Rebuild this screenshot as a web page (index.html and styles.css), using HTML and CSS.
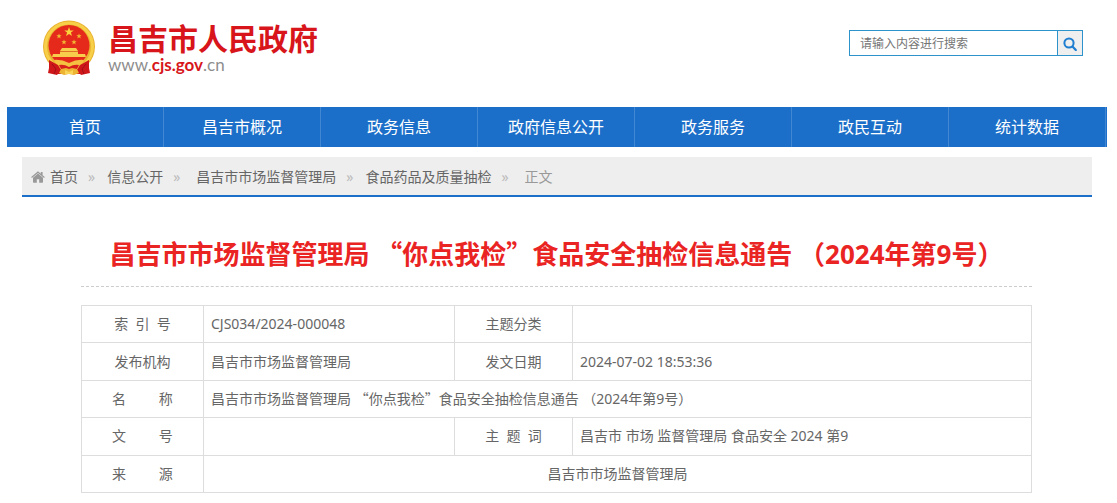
FILE: index.html
```html
<!DOCTYPE html>
<html lang="zh-CN">
<head>
<meta charset="utf-8">
<title>昌吉市人民政府</title>
<link rel="stylesheet" href="styles.css">
</head>
<body>
<div class="page">
  <header class="header">
    <a class="brand" href="#">
      <svg class="emblem" viewBox="0 0 54 56" aria-hidden="true">
        <circle cx="27" cy="26.500" r="26" fill="#e9b22f"/>
        <circle cx="27" cy="26.500" r="23.500" fill="none" stroke="#f7cf49" stroke-width="3"/>
        <circle cx="27" cy="25.500" r="20.500" fill="#e52a1c"/>
        <path d="m27 7 1.200 3.400h3.600l-2.900 2.200 1.100 3.500-3-2.100-3 2.100 1.100-3.500-2.900-2.200h3.600z" fill="#f9d23c"/>
        <g fill="#f2b932">
          <path id="s" d="m17 13.500.7 1.800h1.900l-1.500 1.200.6 1.900-1.700-1.100-1.700 1.100.6-1.900-1.500-1.200h1.900z"/>
          <use href="#s" x="20"/><use href="#s" x="5" y="6"/><use href="#s" x="15" y="6"/>
        </g>
        <path d="M20 28h14l2 3v3H18v-3zM11 34h32l1 3H10z" fill="#f8cd4c"/>
        <path d="M18 31h18v1H18z" fill="#df7429"/>
        <path d="M12 40q7-1 15 3 8-4 15-3l-4 8H16z" fill="#f4c140"/>
        <path d="M7 40l9 5 3 5-4 5-9-2 1-5zM47 40l-9 5-3 5 4 5 9-2-1-5z" fill="#cf171a"/>
        <path d="M17 45q5-1 10 2 5-3 10-2l-2 4-8 1-8-1z" fill="#d81f1c"/>
        <path d="M14 49h26v5H14z" fill="#cf171a"/>
        <path d="m19 49 5-1 3 1 3-1 5 1 2 4-5 2-5-1-5 1-5-2z" fill="#edb333"/>
        <path d="M23 50v4h8v-4l-4 2z" fill="#f9d557"/>
        <path d="m10 44 4 5-2 5m32-10-4 5 2 5" fill="none" stroke="#9d1116"/>
      </svg>
      <span class="brand-text">
        <span class="brand-name">昌吉市人民政府</span>
        <span class="brand-url">www.<b>cjs.gov</b>.cn</span>
      </span>
    </a>
    <form class="search">
      <input class="search-input" type="text" placeholder="请输入内容进行搜索" aria-label="请输入内容进行搜索">
      <button class="search-button" type="button" aria-label="搜索">
        <svg class="search-icon" viewBox="0 0 14 14" aria-hidden="true"><circle cx="6" cy="6" r="4.600" fill="none" stroke="currentColor" stroke-width="2"/><path d="m9.500 9.500 3.300 3.500" stroke="currentColor" stroke-width="2.200" stroke-linecap="round"/></svg>
      </button>
    </form>
  </header>
  <nav class="nav">
    <a href="#">首页</a>
    <a href="#">昌吉市概况</a>
    <a href="#">政务信息</a>
    <a href="#">政府信息公开</a>
    <a href="#">政务服务</a>
    <a href="#">政民互动</a>
    <a href="#">统计数据</a>
  </nav>
  <nav class="crumbs" aria-label="位置">
    <svg class="home-icon" viewBox="0 0 14 12" aria-hidden="true"><path d="M7 2.600 2 6.800V11q0 .7.700.7H5.800V8.300h2.400v3.400h3.100q.7 0 .7-.7V6.800z"/><path d="M7 .3.200 6l.7.900L7 1.900l6.100 5 .7-.9-2.200-1.800V1H9.800v1.700z"/></svg>
    <a href="#">首页</a>
    <span class="sep">»</span>
    <a href="#">信息公开</a>
    <span class="sep sep-wide">»</span>
    <a href="#">昌吉市市场监督管理局</a>
    <span class="sep">»</span>
    <a href="#">食品药品及质量抽检</a>
    <span class="sep sep-wide">»</span>
    <span class="current">正文</span>
  </nav>
  <main class="article">
    <h1 class="title">昌吉市市场监督管理局 <span class="quote">“</span>你点我检<span class="quote">”</span>食品安全抽检信息通告 （2024年第9号）</h1>
    <table class="info">
      <colgroup><col class="col-label"><col class="col-value"><col class="col-label-second"><col></colgroup>
      <tbody>
        <tr><th>索&nbsp;&nbsp;引&nbsp;&nbsp;号</th><td>CJS034/2024-000048</td><th>主题分类</th><td></td></tr>
        <tr><th>发布机构</th><td>昌吉市市场监督管理局</td><th>发文日期</th><td>2024-07-02 18:53:36</td></tr>
        <tr><th>名&nbsp;&nbsp;&nbsp;&nbsp;&nbsp;&nbsp;&nbsp;&nbsp;&nbsp;称</th><td colspan="3">昌吉市市场监督管理局 <span class="quote">“</span>你点我检<span class="quote">”</span>食品安全抽检信息通告 （2024年第9号）</td></tr>
        <tr><th>文&nbsp;&nbsp;&nbsp;&nbsp;&nbsp;&nbsp;&nbsp;&nbsp;&nbsp;号</th><td></td><th>主&nbsp;&nbsp;题&nbsp;&nbsp;词</th><td>昌吉市 市场 监督管理局 食品安全 2024 第9</td></tr>
        <tr><th>来&nbsp;&nbsp;&nbsp;&nbsp;&nbsp;&nbsp;&nbsp;&nbsp;&nbsp;源</th><td class="source" colspan="3">昌吉市市场监督管理局</td></tr>
      </tbody>
    </table>
  </main>
</div>
</body>
</html>
```
FILE: styles.css
```css
* { box-sizing: border-box; }
body {
  margin: 0;
  background: #fff;
  color: #666;
  font: 14px/20px "Noto Sans", "Noto Sans CJK SC", sans-serif;
}
a { color: inherit; text-decoration: none; }
.page { max-width: 1117px; margin: 0 auto; padding: 0 10px 0 7px; }

.header {
  display: flex;
  justify-content: space-between;
  align-items: flex-start;
  padding: 20px 24px 0 35px;
  min-height: 107px;
}
.brand { display: flex; gap: 12px; }
.emblem { width: 54px; height: 56px; }
.brand-text { display: flex; flex-direction: column; padding-top: 4px; }
.brand-name {
  color: #d7151a;
  font: 700 30px/32px "Liberation Sans", "Noto Sans CJK SC", sans-serif;
}
.brand-url { color: #8e8e8e; font: 17px/18px Lato, sans-serif; }
.brand-url b { color: #d7151a; }

.search {
  display: flex;
  width: 234px;
  height: 26px;
  margin-top: 10px;
  border: 1px solid #2e92cb;
}
.search-input {
  flex: 1;
  min-width: 0;
  padding: 0 10px;
  border: 0;
  outline: 0;
  background: #fff;
  font: 12px/24px "Noto Sans CJK SC", sans-serif;
}
.search-input::placeholder { color: #757575; }
.search-button {
  display: flex;
  align-items: center;
  justify-content: center;
  width: 25px;
  padding: 2px 0 0;
  border: 0;
  border-left: 1px solid #2e92cb;
  background: #efefef;
  color: #1f7ed0;
}
.search-icon { width: 14px; height: 14px; }

.nav {
  display: flex;
  padding-right: 1px;
  background: #1c6fc9;
  color: #fff;
  font-size: 16px;
  line-height: 40px;
  text-align: center;
}
.nav a { flex: 1 1 0; border-right: 1px solid #4287d2; }

.crumbs {
  display: flex;
  align-items: center;
  height: 40px;
  margin: 10px 15px 0;
  padding: 2px 9px 0;
  border-bottom: 2px solid #1c6fc9;
  background: #eee;
}
.home-icon { width: 14px; height: 12px; margin-right: 5px; fill: #999; }
.sep { margin: 0 12px 0 10px; color: #bbb; }
.sep-wide { margin-right: 16px; }
.current { color: #999; }

.article { margin: 0 75px 0 74px; }
.title {
  margin: 38px 0 18px;
  padding-bottom: 12px;
  border-bottom: 1px dashed #ccc;
  color: #ea2323;
  font-size: 26px;
  line-height: 39px;
  text-align: center;
}
.quote { font-family: "Noto Sans CJK SC", sans-serif; line-height: 1; }

.info { width: 100%; height: 188px; border-collapse: collapse; table-layout: fixed; }
.info th, .info td { padding: 0 7px; border: 1px solid #ddd; }
.info th { font-weight: 400; text-align: center; }
.col-label { width: 122px; }
.col-value { width: 251px; }
.col-label-second { width: 118px; }
.info .source { text-align: center; }
```
